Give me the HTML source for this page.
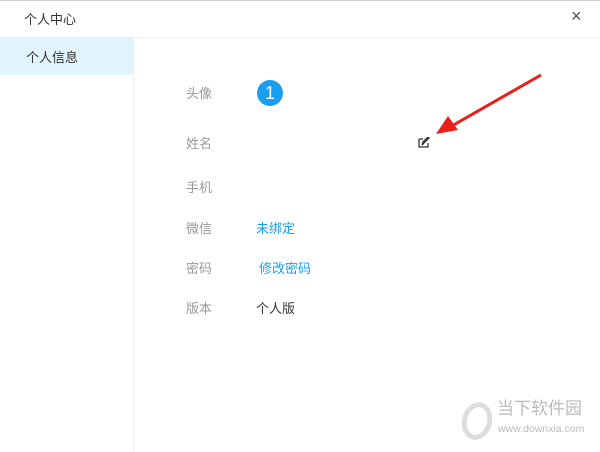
<!DOCTYPE html>
<html><head><meta charset="utf-8"><style>
body{margin:0;width:600px;height:452px;background:#fff;position:relative;overflow:hidden;font-family:"Liberation Sans","Noto Sans CJK SC",sans-serif;font-size:13px}
.a{position:absolute;white-space:nowrap}
.l{color:#999;left:186px}
.v{left:256px}
</style></head><body>
<div class="a" style="left:0;top:0;width:600px;height:1px;background:#ccc"></div>
<div class="a" style="left:24px;top:9px;color:#333">个人中心</div>
<div class="a" style="left:571px;top:6px;font-size:18px;color:#555">×</div>
<div class="a" style="left:0;top:37px;width:600px;height:1px;background:#eee"></div>
<div class="a" style="left:0;top:38px;width:133px;height:37px;background:#e1f3fc"></div>
<div class="a" style="left:26px;top:47px;color:#333">个人信息</div>
<div class="a" style="left:133px;top:38px;width:1px;height:414px;background:#eee"></div>
<div class="a l" style="top:83px">头像</div>
<div class="a" style="left:257px;top:80px;width:26px;height:26px;border-radius:50%;background:#1a9ff0;color:#fff;font-size:18px;text-align:center;line-height:26px">1</div>
<div class="a l" style="top:133px">姓名</div>
<svg class="a" style="left:418px;top:137px" width="12" height="11" viewBox="0 0 12 11"><path d="M1 2h4M1 2v8h9V6M4 8l1-3 5-5 1 1-5 5z" fill="none" stroke="#333" stroke-width="1.3"/></svg>
<svg class="a" style="left:430px;top:70px" width="115" height="65"><line x1="111" y1="5" x2="20" y2="57" stroke="#e8201c" stroke-width="3"/><polygon points="6,64 18,46 28,60" fill="#e8201c"/></svg>
<div class="a l" style="top:177px">手机</div>
<div class="a l" style="top:218px">微信</div>
<div class="a v" style="top:218px;color:#1a9ff0">未绑定</div>
<div class="a l" style="top:258px">密码</div>
<div class="a v" style="top:258px;left:259px;color:#1a9ff0">修改密码</div>
<div class="a l" style="top:298px">版本</div>
<div class="a v" style="top:298px;color:#333">个人版</div>
<div class="a" style="left:462px;top:402px;width:20px;height:28px;border:5px solid #ddd;border-radius:50%;transform:rotate(15deg)"></div>
<div class="a" style="left:497px;top:394px;font-size:17px;color:#bbb">当下软件园</div>
<div class="a" style="left:498px;top:423px;font-size:10.5px;color:#bbb">www.downxia.com</div>
</body></html>
